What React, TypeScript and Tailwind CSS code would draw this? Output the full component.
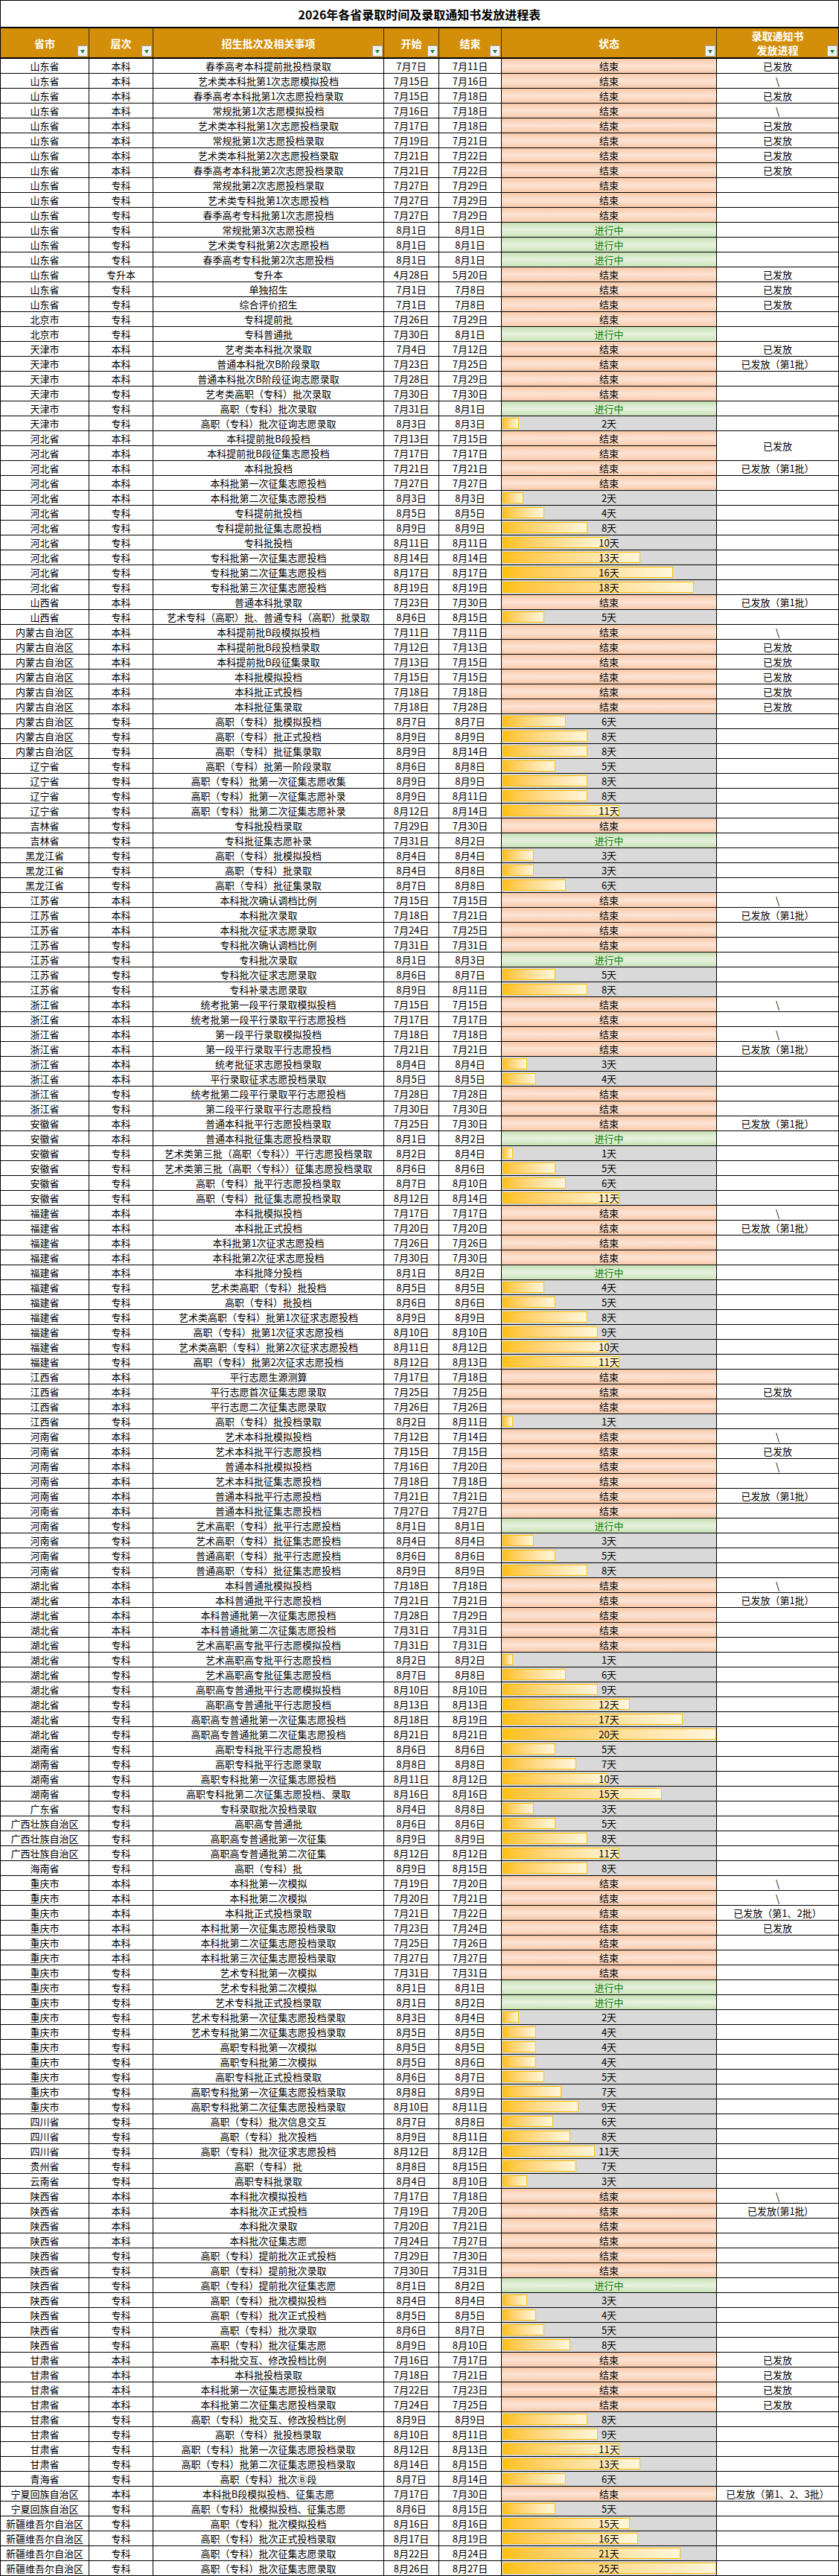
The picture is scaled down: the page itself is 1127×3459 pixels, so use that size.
type Status = "E" | "P" | [number, number];
type Row = [string, string, string, string, string, Status, string];

// notice: "" empty, "M" = merged 已发放 over two rows, "S" = covered by merge
const rows: Row[] = [
  ["山东省", "本科", "春季高考本科提前批投档录取", "7月7日", "7月11日", "E", "已发放"],
  ["山东省", "本科", "艺术类本科批第1次志愿模拟投档", "7月15日", "7月16日", "E", "\\"],
  ["山东省", "本科", "春季高考本科批第1次志愿投档录取", "7月15日", "7月18日", "E", "已发放"],
  ["山东省", "本科", "常规批第1次志愿模拟投档", "7月16日", "7月18日", "E", "\\"],
  ["山东省", "本科", "艺术类本科批第1次志愿投档录取", "7月17日", "7月18日", "E", "已发放"],
  ["山东省", "本科", "常规批第1次志愿投档录取", "7月19日", "7月21日", "E", "已发放"],
  ["山东省", "本科", "艺术类本科批第2次志愿投档录取", "7月21日", "7月22日", "E", "已发放"],
  ["山东省", "本科", "春季高考本科批第2次志愿投档录取", "7月21日", "7月22日", "E", "已发放"],
  ["山东省", "专科", "常规批第2次志愿投档录取", "7月27日", "7月29日", "E", ""],
  ["山东省", "专科", "艺术类专科批第1次志愿投档", "7月27日", "7月29日", "E", ""],
  ["山东省", "专科", "春季高考专科批第1次志愿投档", "7月27日", "7月29日", "E", ""],
  ["山东省", "专科", "常规批第3次志愿投档", "8月1日", "8月1日", "P", ""],
  ["山东省", "专科", "艺术类专科批第2次志愿投档", "8月1日", "8月1日", "P", ""],
  ["山东省", "专科", "春季高考专科批第2次志愿投档", "8月1日", "8月1日", "P", ""],
  ["山东省", "专升本", "专升本", "4月28日", "5月20日", "E", "已发放"],
  ["山东省", "专科", "单独招生", "7月1日", "7月8日", "E", "已发放"],
  ["山东省", "专科", "综合评价招生", "7月1日", "7月8日", "E", "已发放"],
  ["北京市", "专科", "专科提前批", "7月26日", "7月29日", "E", ""],
  ["北京市", "专科", "专科普通批", "7月30日", "8月1日", "P", ""],
  ["天津市", "本科", "艺考类本科批次录取", "7月4日", "7月12日", "E", "已发放"],
  ["天津市", "本科", "普通本科批次B阶段录取", "7月23日", "7月25日", "E", "已发放（第1批）"],
  ["天津市", "本科", "普通本科批次B阶段征询志愿录取", "7月28日", "7月29日", "E", ""],
  ["天津市", "专科", "艺考类高职（专科）批次录取", "7月30日", "7月30日", "E", ""],
  ["天津市", "专科", "高职（专科）批次录取", "7月31日", "8月1日", "P", ""],
  ["天津市", "专科", "高职（专科）批次征询志愿录取", "8月3日", "8月3日", [2, 22], ""],
  ["河北省", "本科", "本科提前批B段投档", "7月13日", "7月15日", "E", "M"],
  ["河北省", "本科", "本科提前批B段征集志愿投档", "7月17日", "7月17日", "E", "S"],
  ["河北省", "本科", "本科批投档", "7月21日", "7月21日", "E", "已发放（第1批）"],
  ["河北省", "本科", "本科批第一次征集志愿投档", "7月27日", "7月27日", "E", ""],
  ["河北省", "本科", "本科批第二次征集志愿投档", "8月3日", "8月3日", [2, 28], ""],
  ["河北省", "专科", "专科提前批投档", "8月5日", "8月5日", [4, 56], ""],
  ["河北省", "专科", "专科提前批征集志愿投档", "8月9日", "8月9日", [8, 114], ""],
  ["河北省", "专科", "专科批投档", "8月11日", "8月11日", [10, 142], ""],
  ["河北省", "专科", "专科批第一次征集志愿投档", "8月14日", "8月14日", [13, 185], ""],
  ["河北省", "专科", "专科批第二次征集志愿投档", "8月17日", "8月17日", [16, 229], ""],
  ["河北省", "专科", "专科批第三次征集志愿投档", "8月19日", "8月19日", [18, 257], ""],
  ["山西省", "本科", "普通本科批录取", "7月23日", "7月30日", "E", "已发放（第1批）"],
  ["山西省", "专科", "艺术专科（高职）批、普通专科（高职）批录取", "8月6日", "8月15日", [5, 56], ""],
  ["内蒙古自治区", "本科", "本科提前批B段模拟投档", "7月11日", "7月11日", "E", "\\"],
  ["内蒙古自治区", "本科", "本科提前批B段投档录取", "7月12日", "7月13日", "E", "已发放"],
  ["内蒙古自治区", "本科", "本科提前批B段征集录取", "7月13日", "7月15日", "E", "已发放"],
  ["内蒙古自治区", "本科", "本科批模拟投档", "7月15日", "7月15日", "E", "已发放"],
  ["内蒙古自治区", "本科", "本科批正式投档", "7月18日", "7月18日", "E", "已发放"],
  ["内蒙古自治区", "本科", "本科批征集录取", "7月18日", "7月28日", "E", "已发放"],
  ["内蒙古自治区", "专科", "高职（专科）批模拟投档", "8月7日", "8月7日", [6, 85], ""],
  ["内蒙古自治区", "专科", "高职（专科）批正式投档", "8月9日", "8月9日", [8, 114], ""],
  ["内蒙古自治区", "专科", "高职（专科）批征集录取", "8月9日", "8月14日", [8, 114], ""],
  ["辽宁省", "专科", "高职（专科）批第一阶段录取", "8月6日", "8月8日", [5, 71], ""],
  ["辽宁省", "专科", "高职（专科）批第一次征集志愿收集", "8月9日", "8月9日", [8, 114], ""],
  ["辽宁省", "专科", "高职（专科）批第一次征集志愿补录", "8月9日", "8月11日", [8, 114], ""],
  ["辽宁省", "专科", "高职（专科）批第二次征集志愿补录", "8月12日", "8月14日", [11, 157], ""],
  ["吉林省", "专科", "专科批投档录取", "7月29日", "7月30日", "E", ""],
  ["吉林省", "专科", "专科批征集志愿补录", "7月31日", "8月2日", "P", ""],
  ["黑龙江省", "专科", "高职（专科）批模拟投档", "8月4日", "8月4日", [3, 42], ""],
  ["黑龙江省", "专科", "高职（专科）批录取", "8月4日", "8月8日", [3, 42], ""],
  ["黑龙江省", "专科", "高职（专科）批征集录取", "8月7日", "8月8日", [6, 85], ""],
  ["江苏省", "本科", "本科批次确认调档比例", "7月15日", "7月15日", "E", "\\"],
  ["江苏省", "本科", "本科批次录取", "7月18日", "7月21日", "E", "已发放（第1批）"],
  ["江苏省", "本科", "本科批次征求志愿录取", "7月24日", "7月25日", "E", ""],
  ["江苏省", "专科", "专科批次确认调档比例", "7月31日", "7月31日", "E", ""],
  ["江苏省", "专科", "专科批次录取", "8月1日", "8月3日", "P", ""],
  ["江苏省", "专科", "专科批次征求志愿录取", "8月6日", "8月7日", [5, 71], ""],
  ["江苏省", "专科", "专科补录志愿录取", "8月9日", "8月11日", [8, 114], ""],
  ["浙江省", "本科", "统考批第一段平行录取模拟投档", "7月15日", "7月15日", "E", "\\"],
  ["浙江省", "本科", "统考批第一段平行录取平行志愿投档", "7月17日", "7月17日", "E", ""],
  ["浙江省", "本科", "第一段平行录取模拟投档", "7月18日", "7月18日", "E", "\\"],
  ["浙江省", "本科", "第一段平行录取平行志愿投档", "7月21日", "7月21日", "E", "已发放（第1批）"],
  ["浙江省", "本科", "统考批征求志愿投档录取", "8月4日", "8月4日", [3, 33], ""],
  ["浙江省", "本科", "平行录取征求志愿投档录取", "8月5日", "8月5日", [4, 45], ""],
  ["浙江省", "专科", "统考批第二段平行录取平行志愿投档", "7月28日", "7月28日", "E", ""],
  ["浙江省", "专科", "第二段平行录取平行志愿投档", "7月30日", "7月30日", "E", ""],
  ["安徽省", "本科", "普通本科批平行志愿投档录取", "7月25日", "7月30日", "E", "已发放（第1批）"],
  ["安徽省", "本科", "普通本科批征集志愿投档录取", "8月1日", "8月2日", "P", ""],
  ["安徽省", "专科", "艺术类第三批（高职〈专科〉）平行志愿投档录取", "8月2日", "8月4日", [1, 14], ""],
  ["安徽省", "专科", "艺术类第三批（高职〈专科〉）征集志愿投档录取", "8月6日", "8月6日", [5, 71], ""],
  ["安徽省", "专科", "高职（专科）批平行志愿投档录取", "8月7日", "8月10日", [6, 85], ""],
  ["安徽省", "专科", "高职（专科）批征集志愿投档录取", "8月12日", "8月14日", [11, 157], ""],
  ["福建省", "本科", "本科批模拟投档", "7月17日", "7月17日", "E", "\\"],
  ["福建省", "本科", "本科批正式投档", "7月20日", "7月20日", "E", "已发放（第1批）"],
  ["福建省", "本科", "本科批第1次征求志愿投档", "7月26日", "7月26日", "E", ""],
  ["福建省", "本科", "本科批第2次征求志愿投档", "7月30日", "7月30日", "E", ""],
  ["福建省", "本科", "本科批降分投档", "8月1日", "8月2日", "P", ""],
  ["福建省", "专科", "艺术类高职（专科）批投档", "8月5日", "8月5日", [4, 56], ""],
  ["福建省", "专科", "高职（专科）批投档", "8月6日", "8月6日", [5, 71], ""],
  ["福建省", "专科", "艺术类高职（专科）批第1次征求志愿投档", "8月9日", "8月9日", [8, 114], ""],
  ["福建省", "专科", "高职（专科）批第1次征求志愿投档", "8月10日", "8月10日", [9, 128], ""],
  ["福建省", "专科", "艺术类高职（专科）批第2次征求志愿投档", "8月11日", "8月12日", [10, 142], ""],
  ["福建省", "专科", "高职（专科）批第2次征求志愿投档", "8月12日", "8月13日", [11, 157], ""],
  ["江西省", "本科", "平行志愿生源测算", "7月17日", "7月18日", "E", ""],
  ["江西省", "本科", "平行志愿首次征集志愿录取", "7月25日", "7月25日", "E", "已发放"],
  ["江西省", "本科", "平行志愿二次征集志愿录取", "7月26日", "7月26日", "E", ""],
  ["江西省", "专科", "高职（专科）批投档录取", "8月2日", "8月11日", [1, 14], ""],
  ["河南省", "本科", "艺术本科批模拟投档", "7月12日", "7月14日", "E", "\\"],
  ["河南省", "本科", "艺术本科批平行志愿投档", "7月15日", "7月15日", "E", "已发放"],
  ["河南省", "本科", "普通本科批模拟投档", "7月16日", "7月20日", "E", "\\"],
  ["河南省", "本科", "艺术本科批征集志愿投档", "7月18日", "7月18日", "E", ""],
  ["河南省", "本科", "普通本科批平行志愿投档", "7月21日", "7月21日", "E", "已发放（第1批）"],
  ["河南省", "本科", "普通本科批征集志愿投档", "7月27日", "7月27日", "E", ""],
  ["河南省", "专科", "艺术高职（专科）批平行志愿投档", "8月1日", "8月1日", "P", ""],
  ["河南省", "专科", "艺术高职（专科）批征集志愿投档", "8月4日", "8月4日", [3, 42], ""],
  ["河南省", "专科", "普通高职（专科）批平行志愿投档", "8月6日", "8月6日", [5, 71], ""],
  ["河南省", "专科", "普通高职（专科）批征集志愿投档", "8月9日", "8月9日", [8, 114], ""],
  ["湖北省", "本科", "本科普通批模拟投档", "7月18日", "7月18日", "E", "\\"],
  ["湖北省", "本科", "本科普通批平行志愿投档", "7月21日", "7月21日", "E", "已发放（第1批）"],
  ["湖北省", "本科", "本科普通批第一次征集志愿投档", "7月28日", "7月29日", "E", ""],
  ["湖北省", "本科", "本科普通批第二次征集志愿投档", "7月31日", "7月31日", "E", ""],
  ["湖北省", "专科", "艺术高职高专批平行志愿模拟投档", "7月31日", "7月31日", "E", ""],
  ["湖北省", "专科", "艺术高职高专批平行志愿投档", "8月2日", "8月2日", [1, 14], ""],
  ["湖北省", "专科", "艺术高职高专批征集志愿投档", "8月7日", "8月8日", [6, 85], ""],
  ["湖北省", "专科", "高职高专普通批平行志愿模拟投档", "8月10日", "8月10日", [9, 128], ""],
  ["湖北省", "专科", "高职高专普通批平行志愿投档", "8月13日", "8月13日", [12, 171], ""],
  ["湖北省", "专科", "高职高专普通批第一次征集志愿投档", "8月18日", "8月19日", [17, 242], ""],
  ["湖北省", "专科", "高职高专普通批第二次征集志愿投档", "8月21日", "8月21日", [20, 287], ""],
  ["湖南省", "专科", "高职专科批平行志愿投档", "8月6日", "8月6日", [5, 71], ""],
  ["湖南省", "专科", "高职专科批平行志愿录取", "8月8日", "8月8日", [7, 99], ""],
  ["湖南省", "专科", "高职专科批第一次征集志愿投档", "8月11日", "8月12日", [10, 142], ""],
  ["湖南省", "专科", "高职专科批第二次征集志愿投档、录取", "8月16日", "8月16日", [15, 214], ""],
  ["广东省", "专科", "专科录取批次投档录取", "8月4日", "8月8日", [3, 42], ""],
  ["广西壮族自治区", "专科", "高职高专普通批", "8月6日", "8月6日", [5, 71], ""],
  ["广西壮族自治区", "专科", "高职高专普通批第一次征集", "8月9日", "8月9日", [8, 114], ""],
  ["广西壮族自治区", "专科", "高职高专普通批第二次征集", "8月12日", "8月12日", [11, 157], ""],
  ["海南省", "专科", "高职（专科）批", "8月9日", "8月15日", [8, 114], ""],
  ["重庆市", "本科", "本科批第一次模拟", "7月19日", "7月20日", "E", "\\"],
  ["重庆市", "本科", "本科批第二次模拟", "7月20日", "7月21日", "E", "\\"],
  ["重庆市", "本科", "本科批正式投档录取", "7月21日", "7月22日", "E", "已发放（第1、2批）"],
  ["重庆市", "本科", "本科批第一次征集志愿投档录取", "7月23日", "7月24日", "E", "已发放"],
  ["重庆市", "本科", "本科批第二次征集志愿投档录取", "7月25日", "7月26日", "E", ""],
  ["重庆市", "本科", "本科批第三次征集志愿投档录取", "7月27日", "7月27日", "E", ""],
  ["重庆市", "专科", "艺术专科批第一次模拟", "7月31日", "7月31日", "E", ""],
  ["重庆市", "专科", "艺术专科批第二次模拟", "8月1日", "8月1日", "P", ""],
  ["重庆市", "专科", "艺术专科批正式投档录取", "8月1日", "8月2日", "P", ""],
  ["重庆市", "专科", "艺术专科批第一次征集志愿投档录取", "8月3日", "8月4日", [2, 22], ""],
  ["重庆市", "专科", "艺术专科批第二次征集志愿投档录取", "8月5日", "8月5日", [4, 45], ""],
  ["重庆市", "专科", "高职专科批第一次模拟", "8月5日", "8月5日", [4, 45], ""],
  ["重庆市", "专科", "高职专科批第二次模拟", "8月5日", "8月6日", [4, 45], ""],
  ["重庆市", "专科", "高职专科批正式投档录取", "8月6日", "8月7日", [5, 56], ""],
  ["重庆市", "专科", "高职专科批第一次征集志愿投档录取", "8月8日", "8月9日", [7, 79], ""],
  ["重庆市", "专科", "高职专科批第二次征集志愿投档录取", "8月10日", "8月11日", [9, 102], ""],
  ["四川省", "专科", "高职（专科）批次信息交互", "8月7日", "8月8日", [6, 68], ""],
  ["四川省", "专科", "高职（专科）批次投档", "8月9日", "8月11日", [8, 91], ""],
  ["四川省", "专科", "高职（专科）批次征求志愿投档", "8月12日", "8月12日", [11, 124], ""],
  ["贵州省", "专科", "高职（专科）批", "8月8日", "8月15日", [7, 99], ""],
  ["云南省", "专科", "高职专科批录取", "8月4日", "8月10日", [3, 33], ""],
  ["陕西省", "本科", "本科批次模拟投档", "7月17日", "7月18日", "E", "\\"],
  ["陕西省", "本科", "本科批次正式投档", "7月19日", "7月20日", "E", "已发放(第1批)"],
  ["陕西省", "本科", "本科批次录取", "7月20日", "7月21日", "E", ""],
  ["陕西省", "本科", "本科批次征集志愿", "7月24日", "7月27日", "E", ""],
  ["陕西省", "专科", "高职（专科）提前批次正式投档", "7月29日", "7月30日", "E", ""],
  ["陕西省", "专科", "高职（专科）提前批次录取", "7月30日", "7月31日", "E", ""],
  ["陕西省", "专科", "高职（专科）提前批次征集志愿", "8月1日", "8月2日", "P", ""],
  ["陕西省", "专科", "高职（专科）批次模拟投档", "8月4日", "8月4日", [3, 33], ""],
  ["陕西省", "专科", "高职（专科）批次正式投档", "8月5日", "8月5日", [4, 45], ""],
  ["陕西省", "专科", "高职（专科）批次录取", "8月6日", "8月7日", [5, 56], ""],
  ["陕西省", "专科", "高职（专科）批次征集志愿", "8月9日", "8月10日", [8, 91], ""],
  ["甘肃省", "本科", "本科批交互、修改投档比例", "7月16日", "7月17日", "E", "已发放"],
  ["甘肃省", "本科", "本科批投档录取", "7月18日", "7月21日", "E", "已发放"],
  ["甘肃省", "本科", "本科批第一次征集志愿投档录取", "7月22日", "7月23日", "E", "已发放"],
  ["甘肃省", "本科", "本科批第二次征集志愿投档录取", "7月24日", "7月25日", "E", "已发放"],
  ["甘肃省", "专科", "高职（专科）批交互、修改投档比例", "8月9日", "8月9日", [8, 114], ""],
  ["甘肃省", "专科", "高职（专科）批投档录取", "8月10日", "8月11日", [9, 128], ""],
  ["甘肃省", "专科", "高职（专科）批第一次征集志愿投档录取", "8月12日", "8月13日", [11, 157], ""],
  ["甘肃省", "专科", "高职（专科）批第二次征集志愿投档录取", "8月14日", "8月15日", [13, 185], ""],
  ["青海省", "专科", "高职（专科）批次Ⓑ段", "8月7日", "8月14日", [6, 85], ""],
  ["宁夏回族自治区", "本科", "本科批B段模拟投档、征集志愿", "7月17日", "7月30日", "E", "已发放（第1、2、3批）"],
  ["宁夏回族自治区", "专科", "高职（专科）批模拟投档、征集志愿", "8月6日", "8月15日", [5, 71], ""],
  ["新疆维吾尔自治区", "专科", "高职（专科）批次模拟投档", "8月16日", "8月16日", [15, 171], ""],
  ["新疆维吾尔自治区", "专科", "高职（专科）批次正式投档录取", "8月17日", "8月19日", [16, 182], ""],
  ["新疆维吾尔自治区", "专科", "高职（专科）批次征集志愿录取", "8月22日", "8月24日", [21, 239], ""],
  ["新疆维吾尔自治区", "专科", "高职（专科）批次征集志愿录取", "8月26日", "8月27日", [25, 287], ""],
];

const headers = ["省市", "层次", "招生批次及相关事项", "开始", "结束", "状态"];

const cell = "flex items-center justify-center border-b border-r border-black whitespace-nowrap overflow-hidden";

function FilterButton() {
  return (
    <span className="absolute bottom-[1px] right-[1px] flex h-[15px] w-[14px] items-end justify-center border border-[#a6a6a6] bg-[#f2f2f2] pb-[3px]">
      <svg width="6" height="5" viewBox="0 0 6 5">
        <path d="M0 0 L6 0 L3 5 Z" fill="#1e8a3c" />
      </svg>
    </span>
  );
}

function StatusCell({ status }: { status: Status }) {
  if (status === "E") {
    return (
      <div className={`${cell} bg-linear-to-b from-[#f8c9a9] via-[#fce3d3] to-[#f8cbad]`}>结束</div>
    );
  }
  if (status === "P") {
    return (
      <div className={`${cell} bg-linear-to-b from-[#c6e0b4] via-[#e6f2de] to-[#c9e2b8] text-[#0a7d0a]`}>
        进行中
      </div>
    );
  }
  const [days, px] = status;
  return (
    <div className={`${cell} relative bg-[#d9d9d9]`}>
      <span
        className="absolute left-[1px] top-[2px] bottom-[2px] border border-[#ffc000] bg-linear-to-r from-[#ffc000] to-[#fff6dc]"
        style={{ width: px }}
      />
      <span className="relative">{days}天</span>
    </div>
  );
}

export default function App() {
  return (
    <div
      className="w-[1127px] bg-white text-[13px] leading-none text-black"
      style={{ fontFamily: '"Noto Sans CJK SC", "Noto Sans", sans-serif' }}
    >
      <div className="flex h-[36px] items-center justify-center border-x border-t border-black text-[16px] font-bold">
        2026年各省录取时间及录取通知书发放进程表
      </div>
      <div className="grid h-[43px] grid-cols-[120px_86px_310px_74px_84px_289px_164px] border-y-2 border-black bg-[#d38f0a] text-[14px] font-bold text-white">
        {headers.map((h, i) => (
          <div
            key={h}
            className={`relative flex items-center justify-center border-r border-[#3a2a00] ${i === 0 ? "border-l border-l-black" : ""}`}
          >
            {h}
            <FilterButton />
          </div>
        ))}
        <div className="relative flex flex-col items-center justify-center gap-[3px] border-r border-black leading-[16px]">
          <span>录取通知书</span>
          <span>发放进程</span>
          <FilterButton />
        </div>
      </div>
      <div className="grid grid-cols-[120px_86px_310px_74px_84px_289px_164px] auto-rows-[20px]">
        {rows.map((r, i) => [
          <div key={`${i}a`} className={`${cell} border-l`}>{r[0]}</div>,
          <div key={`${i}b`} className={cell}>{r[1]}</div>,
          <div key={`${i}c`} className={cell}>{r[2]}</div>,
          <div key={`${i}d`} className={cell}>{r[3]}</div>,
          <div key={`${i}e`} className={cell}>{r[4]}</div>,
          <StatusCell key={`${i}f`} status={r[5]} />,
          r[6] === "S" ? null : r[6] === "M" ? (
            <div key={`${i}g`} className={`${cell} row-span-2`}>已发放</div>
          ) : (
            <div key={`${i}g`} className={cell}>{r[6]}</div>
          ),
        ])}
      </div>
    </div>
  );
}
